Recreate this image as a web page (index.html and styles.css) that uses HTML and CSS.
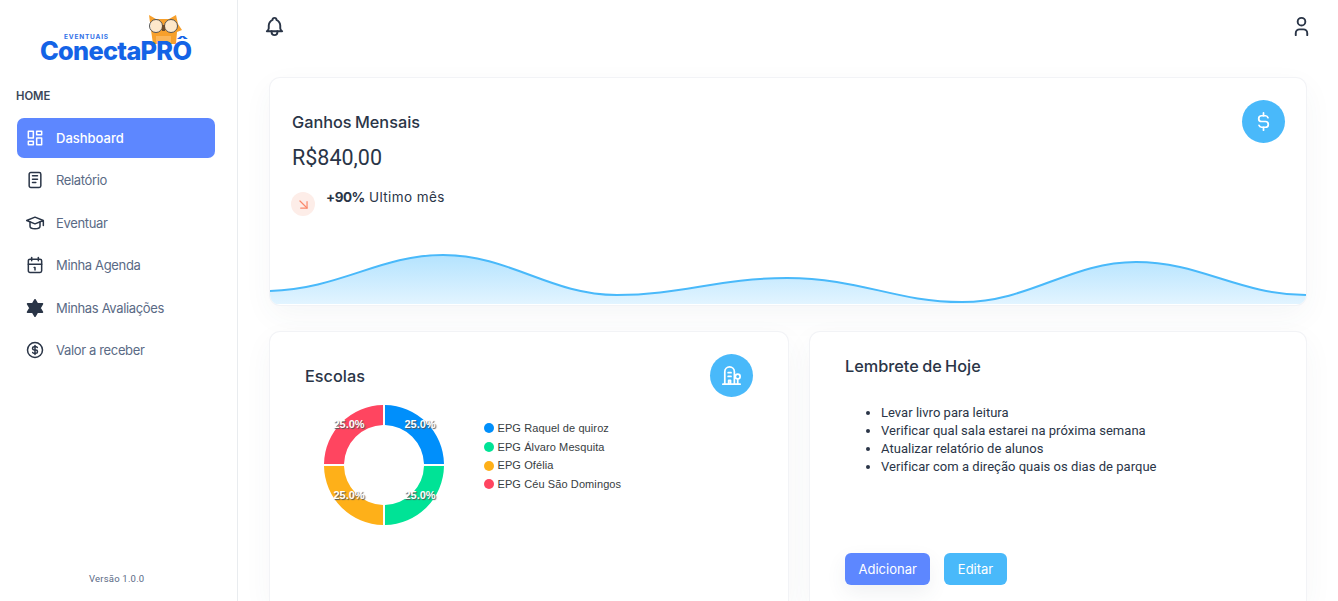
FILE: index.html
```html
<!DOCTYPE html>
<html lang="pt-BR">
<head>
    <meta charset="UTF-8">
    <meta name="viewport" content="width=device-width, initial-scale=1.0">
    <title>ConectaPRÔ Eventuais</title>
    <link rel="stylesheet" href="styles.css">
</head>
<body>
    <aside class="sidebar">
        <div class="logo">
            <svg class="logo-owl" viewBox="0 0 36 30" width="36" height="30">
                <path d="M3 1l7 4h13l7-4 2 9 4 6-5 2-1 12H7L5 16z" fill="#f7a02c"/>
                <path d="M10 22h15v8H10z" fill="#fbb65a"/>
                <circle cx="10" cy="12" r="6.500" fill="#fff" fill-opacity="0.75" stroke="#555" stroke-width="1"/>
                <circle cx="25" cy="12" r="6.500" fill="#fff" fill-opacity="0.75" stroke="#555" stroke-width="1"/>
                <path d="M16 11h3v6h-3z" fill="#6b4a2a"/>
            </svg>
            <span class="logo-small">EVENTUAIS</span>
            <span class="logo-name">ConectaPRÔ</span>
        </div>
        <div class="nav-title">HOME</div>
        <nav class="nav">
            <a class="nav-item active">
                <svg class="icon" viewBox="0 0 24 24"><path d="M4 4h6v8h-6z"/><path d="M4 16h6v4h-6z"/><path d="M14 12h6v8h-6z"/><path d="M14 4h6v4h-6z"/></svg>
                <span>Dashboard</span>
            </a>
            <a class="nav-item">
                <svg class="icon" viewBox="0 0 24 24"><rect x="5" y="3" width="14" height="18" rx="2"/><path d="M9 7h6"/><path d="M9 11h6"/><path d="M9 15h4"/></svg>
                <span>Relatório</span>
            </a>
            <a class="nav-item">
                <svg class="icon" viewBox="0 0 24 24"><path d="M22 9l-10-4-10 4 10 4 10-4v6"/><path d="M6 10.600v5.400a6 3 0 0 0 12 0v-5.400"/></svg>
                <span>Eventuar</span>
            </a>
            <a class="nav-item">
                <svg class="icon" viewBox="0 0 24 24"><rect x="4" y="5" width="16" height="16" rx="2"/><path d="M16 3v4"/><path d="M8 3v4"/><path d="M4 11h16"/><path d="M11 15h1v3"/></svg>
                <span>Minha Agenda</span>
            </a>
            <a class="nav-item">
                <svg class="icon star" viewBox="0 0 24 24"><path d="M12 2l3 5h6l-3 5 3 5h-6l-3 5-3-5H3l3-5-3-5h6z"/></svg>
                <span>Minhas Avaliações</span>
            </a>
            <a class="nav-item">
                <svg class="icon" viewBox="0 0 24 24"><circle cx="12" cy="12" r="9"/><path d="M14.800 9a2 2 0 0 0-1.800-1h-2a2 2 0 1 0 0 4h2a2 2 0 1 1 0 4h-2a2 2 0 0 1-1.800-1"/><path d="M12 6.500v11"/></svg>
                <span>Valor a receber</span>
            </a>
        </nav>
        <div class="version">Versão 1.0.0</div>
    </aside>

    <main class="main">
        <header class="topbar">
            <svg class="icon top-icon" viewBox="0 0 24 24"><path d="M10 5a2 2 0 1 1 4 0 7 7 0 0 1 4 6v3a4 4 0 0 0 2 3H4a4 4 0 0 0 2-3v-3a7 7 0 0 1 4-6"/><path d="M9 17v1a3 3 0 0 0 6 0v-1"/></svg>
            <svg class="icon top-icon" viewBox="0 0 24 24"><path d="M8 7a4 4 0 1 0 8 0 4 4 0 0 0-8 0"/><path d="M6 21v-2a4 4 0 0 1 4-4h4a4 4 0 0 1 4 4v2"/></svg>
        </header>

        <section class="card earnings">
            <div class="earnings-body">
                <div>
                    <h2 class="card-title">Ganhos Mensais</h2>
                    <div class="amount">R$840,00</div>
                    <div class="trend">
                        <span class="trend-icon">
                            <svg class="icon" viewBox="0 0 24 24"><path d="M7 7l10 10"/><path d="M17 8v9H8"/></svg>
                        </span>
                        <p class="trend-text"><strong>+90%</strong> Ultimo mês</p>
                    </div>
                </div>
                <span class="round-icon">
                    <svg class="icon" viewBox="0 0 24 24"><path d="M16.700 8a3 3 0 0 0-2.700-2h-4a3 3 0 0 0 0 6h4a3 3 0 0 1 0 6h-4a3 3 0 0 1-2.700-2"/><path d="M12 3v3m0 12v3"/></svg>
                </span>
            </div>
            <svg class="wave" viewBox="0 0 1036 55" width="1036" height="55" preserveAspectRatio="none">
                <defs>
                    <linearGradient id="waveFill" x1="0" y1="0" x2="0" y2="1">
                        <stop offset="0" stop-color="#b4e3fe"/>
                        <stop offset="1" stop-color="#e2f4ff"/>
                    </linearGradient>
                </defs>
                <path d="M0 41C70 39 110 5 173 5C240 5 280 45 347 45C410 45 450 28 517 28C590 28 625 52 692 52C760 52 800 12 866 12C930 12 970 45 1036 45V54H0Z" fill="url(#waveFill)"/>
                <path d="M0 41C70 39 110 5 173 5C240 5 280 45 347 45C410 45 450 28 517 28C590 28 625 52 692 52C760 52 800 12 866 12C930 12 970 45 1036 45" fill="none" stroke="#49b9fa" stroke-width="2"/>
            </svg>
        </section>

        <div class="row">
            <section class="card schools">
                <div class="schools-head">
                    <h2 class="card-title">Escolas</h2>
                    <span class="round-icon">
                        <svg class="icon" viewBox="0 0 24 24"><path d="M3 21h18"/><path d="M5 21V8a5 5 0 0 1 5-5h0a5 5 0 0 1 5 5v13"/><path d="M8.500 9h3"/><path d="M8.500 13h3"/><path d="M9 21v-4h2v4"/><circle cx="18.500" cy="13" r="2.500"/><path d="M18.500 15.500V21"/></svg>
                    </span>
                </div>
                <div class="chart-row">
                    <svg class="donut" viewBox="0 0 120 120" width="120" height="120">
                        <path d="M61 0A60 60 0 0 1 120 59H100A40 40 0 0 0 61 20Z" fill="#008ffb"/>
                        <path d="M120 61A60 60 0 0 1 61 120V100A40 40 0 0 0 100 61Z" fill="#00e396"/>
                        <path d="M59 120A60 60 0 0 1 0 61H20A40 40 0 0 0 59 100Z" fill="#feb019"/>
                        <path d="M0 59A60 60 0 0 1 59 0V20A40 40 0 0 0 20 59Z" fill="#ff4560"/>
                        <text class="donut-label" x="96" y="20">25.0%</text>
                        <text class="donut-label" x="96" y="91">25.0%</text>
                        <text class="donut-label" x="25" y="91">25.0%</text>
                        <text class="donut-label" x="25" y="20">25.0%</text>
                    </svg>
                    <ul class="legend">
                        <li><span class="dot blue"></span>EPG Raquel de quiroz</li>
                        <li><span class="dot green"></span>EPG Álvaro Mesquita</li>
                        <li><span class="dot yellow"></span>EPG Ofélia</li>
                        <li><span class="dot red"></span>EPG Céu São Domingos</li>
                    </ul>
                </div>
            </section>

            <section class="card reminder">
                <h2 class="card-title">Lembrete de Hoje</h2>
                <ul class="reminder-list">
                    <li>Levar livro para leitura</li>
                    <li>Verificar qual sala estarei na próxima semana</li>
                    <li>Atualizar relatório de alunos</li>
                    <li>Verificar com a direção quais os dias de parque</li>
                </ul>
                <div class="actions">
                    <button class="btn btn-primary">Adicionar</button>
                    <button class="btn btn-info">Editar</button>
                </div>
            </section>
        </div>
    </main>
</body>
</html>
```

FILE: styles.css
```css
* {
    box-sizing: border-box;
}

body {
    display: flex;
    height: 100vh;
    margin: 0;
    overflow: hidden;
    background-color: #fff;
    color: #2a3547;
    font-family: 'Inter', sans-serif;
}

.icon {
    width: 20px;
    height: 20px;
    flex: none;
    fill: none;
    stroke: currentColor;
    stroke-width: 2;
    stroke-linecap: round;
    stroke-linejoin: round;
}

.icon.star {
    fill: currentColor;
    stroke-width: 1;
}

/* sidebar */
.sidebar {
    display: flex;
    flex-direction: column;
    width: 238px;
    flex: none;
    padding: 14px 22px 17px 16px;
    border-right: 1px solid #e9ecef;
}

.logo {
    position: relative;
    height: 48px;
    margin-left: 24px;
}

.logo-small {
    position: absolute;
    left: 24px;
    top: 20px;
    color: #2f6fe8;
    font-size: 6.500px;
    font-weight: 700;
    line-height: 7px;
    letter-spacing: 0.8px;
}

.logo-name {
    position: absolute;
    left: 0;
    top: 27px;
    color: #1463e6;
    font-size: 25.300px;
    font-weight: 800;
    letter-spacing: -0.7px;
    line-height: 20px;
}

.logo-owl {
    position: absolute;
    left: 106px;
    top: 0;
}

.nav-title {
    margin-top: 27px;
    color: #3b4658;
    font-size: 11.300px;
    font-weight: 600;
    line-height: 14px;
}

.nav {
    display: flex;
    flex-direction: column;
    gap: 2.400px;
    margin: 15px 0 0 1px;
}

.nav-item {
    display: flex;
    align-items: center;
    gap: 11px;
    height: 40px;
    padding-left: 8px;
    border-radius: 7px;
    color: #5a6a85;
    font-size: 13px;
    letter-spacing: -0.35px;
}

.nav-item .icon {
    color: #2a3547;
    stroke-width: 1.800;
}

.nav-item.active {
    background-color: #5d87ff;
    color: #fff;
    font-weight: 500;
    letter-spacing: 0;
}

.nav-item.active .icon {
    color: #fff;
}

.version {
    margin-top: auto;
    padding-left: 73px;
    color: #5a6a85;
    font-family: 'Roboto', sans-serif;
    font-size: 9.500px;
    letter-spacing: 0.2px;
}

/* main */
.main {
    flex: 1;
    min-width: 0;
    padding: 0 32px;
}

.topbar {
    display: flex;
    justify-content: space-between;
    height: 78px;
    padding: 15px 0 0 0;
    margin-right: -7px;
    margin-left: -7.500px;
}

.top-icon {
    width: 23px;
    height: 23px;
}

.card {
    border-radius: 10px;
    background-color: #fff;
    box-shadow: 0 0 0 1px #f2f3f6, 0 10px 30px rgba(60, 72, 100, 0.05);
}

.card-title {
    margin: 0;
    font-size: 16.300px;
    font-weight: 500;
    line-height: 24px;
    word-spacing: -1px;
}

.earnings {
    height: 227px;
    overflow: hidden;
}

.earnings-body {
    display: flex;
    justify-content: space-between;
    height: 172px;
    padding: 22px 21px 0 22px;
}

.earnings .card-title {
    margin-top: 10px;
}

.amount {
    margin-top: 11px;
    font-family: 'Roboto', sans-serif;
    font-size: 21.500px;
    line-height: 26px;
    color: #2a3547;
}

.trend {
    display: flex;
    align-items: flex-start;
    gap: 11px;
    margin: 17px 0 0 -1px;
}

.trend-icon {
    display: flex;
    align-items: center;
    justify-content: center;
    width: 24px;
    height: 24px;
    margin-top: 4px;
    border-radius: 50%;
    background-color: #fdede8;
    color: #fa896b;
}

.trend-icon .icon {
    width: 17px;
    height: 17px;
    stroke-width: 1.700;
}

.trend-text {
    margin: 0;
    font-size: 13.500px;
    line-height: 18px;
    letter-spacing: 0.4px;
}

.trend-text strong {
    font-weight: 700;
    letter-spacing: -0.5px;
}

.round-icon {
    display: flex;
    align-items: center;
    justify-content: center;
    width: 43px;
    height: 43px;
    flex: none;
    border-radius: 50%;
    background-color: #49b9fa;
    color: #fff;
}

.round-icon .icon {
    width: 23px;
    height: 23px;
    stroke-width: 1.800;
}

.wave {
    display: block;
    width: 100%;
}

.row {
    display: grid;
    grid-template-columns: 518px 496px;
    gap: 22px;
    margin-top: 27px;
}

/* these two run down to the bottom of the window */
.schools,
.reminder {
    height: 269px;
    border-radius: 10px 10px 0 0;
}

.schools {
    padding: 22px 35px 0;
}

.schools-head {
    display: flex;
    align-items: center;
    justify-content: space-between;
}

.chart-row {
    display: flex;
    align-items: flex-start;
    gap: 40px;
    margin: 8px 0 0 19px;
}

.donut {
    flex: none;
    overflow: visible;
}

.donut-label {
    fill: #fff;
    font-family: 'Liberation Sans', sans-serif;
    font-size: 11px;
    font-weight: 700;
    text-anchor: middle;
    dominant-baseline: middle;
    text-shadow: 1px 1px 1px #555;
}

.legend {
    margin: 14px 0 0 0;
    padding: 0;
    list-style: none;
    font-family: 'Liberation Sans', sans-serif;
    font-size: 11px;
    line-height: 18.700px;
    letter-spacing: 0.1px;
    color: #373d3f;
}

.legend li {
    display: flex;
    align-items: center;
}

.dot {
    width: 10px;
    height: 10px;
    margin-right: 3.500px;
    border-radius: 50%;
}

.dot.blue {
    background-color: #008ffb;
}

.dot.green {
    background-color: #00e396;
}

.dot.yellow {
    background-color: #feb019;
}

.dot.red {
    background-color: #ff4560;
}

.reminder {
    padding: 22px 35px 0;
}

.reminder-list {
    height: 149px;
    margin: 26px 0 0 0;
    padding-left: 36px;
    font-family: 'Roboto', sans-serif;
    font-size: 13px;
    line-height: 18px;
    letter-spacing: 0.03px;
    color: #2a3547;
}

.actions {
    display: flex;
    gap: 14px;
}

.btn {
    height: 32px;
    padding: 0 13.500px;
    border: none;
    border-radius: 6px;
    color: #fff;
    font-family: 'Inter', sans-serif;
    font-size: 13px;
    cursor: pointer;
}

.btn-primary {
    background-color: #5d87ff;
    box-shadow: 0 8px 20px rgba(60, 72, 100, 0.08);
}

.btn-info {
    background-color: #49b9fa;
}
```
